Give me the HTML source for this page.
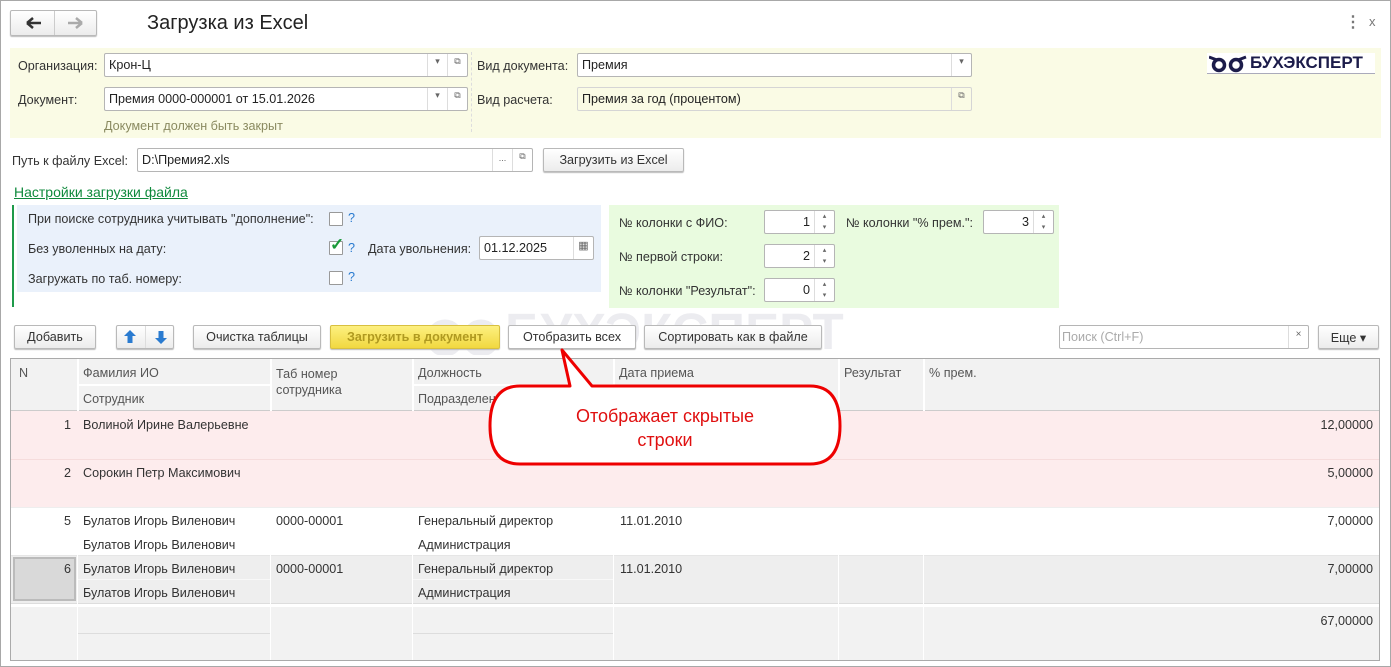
<!DOCTYPE html><html><head><meta charset="utf-8"><style>
*{box-sizing:border-box;margin:0;padding:0}
body{width:1391px;height:667px;position:relative;background:#fff;font-family:"Liberation Sans",Arial,sans-serif;font-size:12.6px;color:#333;overflow:hidden}
.a{position:absolute;white-space:nowrap}
.f{position:absolute;background:#fff;border:1px solid #b5b5b5;border-radius:2px;height:24px;padding:4px 0 0 4px;color:#222}
.btn{position:absolute;height:24px;border:1px solid #b9b9b9;border-radius:2px;background:linear-gradient(#fff,#ececec);box-shadow:0 1px 1px #bbb;text-align:center;padding-top:4px;color:#333}
.sb{position:absolute;top:0;bottom:0;width:20px;border-left:1px solid #ddd;text-align:center;font-size:9px;color:#666}
.cb{position:absolute;width:14px;height:14px;border:1px solid #999;background:#fff;border-radius:1px}
.q{position:absolute;color:#2a7bd0}
.l{position:absolute;background:#ddd}
</style></head><body>
<div class="a" style="left:0;top:0;width:1391px;height:667px;border:1px solid #a8a8a8"></div>
<div class="btn" style="left:10px;top:10px;width:87px;height:26px"></div>
<div class="l" style="left:54px;top:11px;width:1px;height:24px;background:#ccc"></div>
<svg class="a" style="left:24px;top:15px" width="64" height="16"><path d="M3 8H17M3 8L9 3M3 8L9 13" stroke="#333" stroke-width="2.5" fill="none"/><path d="M58 8H44M58 8L52 3M58 8L52 13" stroke="#aaa" stroke-width="2.5" fill="none"/></svg>
<div class="a" style="left:147px;top:12px;font-size:20px;color:#222">Загрузка из Excel</div>
<div class="a" style="left:1345px;top:12px;font-size:16px;color:#777;font-weight:bold">⋮</div>
<div class="a" style="left:1369px;top:14px;font-size:13px;color:#777">x</div>

<div class="a" style="left:10px;top:48px;width:1371px;height:90px;background:#fafbe5"></div>
<div class="a" style="left:471px;top:52px;height:80px;border-left:1px dashed #ddd"></div>
<div class="a" style="left:18px;top:59px">Организация:</div>
<div class="f" style="left:104px;top:53px;width:364px">Крон-Ц<div class="sb" style="right:20px;padding-top:2px">▾</div><div class="sb" style="right:0;padding-top:2px">⧉</div></div>
<div class="a" style="left:18px;top:93px">Документ:</div>
<div class="f" style="left:104px;top:87px;width:364px">Премия 0000-000001 от 15.01.2026<div class="sb" style="right:20px;padding-top:2px">▾</div><div class="sb" style="right:0;padding-top:2px">⧉</div></div>
<div class="a" style="left:104px;top:119px;color:#8a8a60">Документ должен быть закрыт</div>
<div class="a" style="left:477px;top:59px">Вид документа:</div>
<div class="f" style="left:577px;top:53px;width:395px">Премия<div class="sb" style="right:0;padding-top:2px">▾</div></div>
<div class="a" style="left:477px;top:93px">Вид расчета:</div>
<div class="f" style="left:577px;top:87px;width:395px;background:#fafbe5;border-color:#d5d5d5">Премия за год (процентом)<div class="sb" style="right:0;padding-top:2px">⧉</div></div>
<div class="a" style="left:1207px;top:53px;width:168px;height:21px;background:#fff;border-bottom:1px solid #aab"></div>
<svg class="a" style="left:1209px;top:55px" width="40" height="18"><g fill="none" stroke="#1c1c4a" stroke-width="3.5"><circle cx="10" cy="10" r="5.5"/><circle cx="27" cy="10" r="5.5"/></g><path d="M0 2L8 5M37 2L29 5" stroke="#1c1c4a" stroke-width="3"/></svg>
<div class="a" style="left:1250px;top:53px;font-size:17px;font-weight:bold;color:#1c1c4a">БУХЭКСПЕРТ</div>

<div class="a" style="left:12px;top:154px">Путь к файлу Excel:</div>
<div class="f" style="left:137px;top:148px;width:396px">D:\Премия2.xls<div class="sb" style="right:20px;padding-top:4px">...</div><div class="sb" style="right:0;padding-top:2px">⧉</div></div>
<div class="btn" style="left:543px;top:148px;width:141px">Загрузить из Excel</div>
<div class="a" style="left:14px;top:184px;color:#0f8a3c;font-size:14px;text-decoration:underline">Настройки загрузки файла</div>

<div class="a" style="left:12px;top:205px;width:2px;height:102px;background:#1e9a4a"></div>
<div class="a" style="left:17px;top:205px;width:584px;height:87px;background:#eaf1fb"></div>
<div class="a" style="left:28px;top:212px">При поиске сотрудника учитывать "дополнение":</div>
<div class="cb" style="left:329px;top:212px"></div><div class="q" style="left:348px;top:211px">?</div>
<div class="a" style="left:28px;top:242px">Без уволенных на дату:</div>
<div class="cb" style="left:329px;top:241px"></div><div class="a" style="left:330px;top:235px;color:#1a9a3a;font-size:17px;font-weight:bold">✓</div><div class="q" style="left:348px;top:241px">?</div>
<div class="a" style="left:368px;top:242px">Дата увольнения:</div>
<div class="f" style="left:479px;top:236px;width:115px">01.12.2025<div class="sb" style="right:0;padding-top:2px;font-size:11px">▦</div></div>
<div class="a" style="left:28px;top:272px">Загружать по таб. номеру:</div>
<div class="cb" style="left:329px;top:271px"></div><div class="q" style="left:348px;top:270px">?</div>

<div class="a" style="left:609px;top:205px;width:450px;height:103px;background:#e9fbdf"></div>
<div class="a" style="left:619px;top:216px">№ колонки с ФИО:</div>
<div class="f" style="left:764px;top:210px;width:71px;padding:4px 24px 0 0;text-align:right">1<div class="sb" style="right:0;font-size:7px;line-height:11px">▴<br>▾</div></div>
<div class="a" style="left:846px;top:216px">№ колонки "% прем.":</div>
<div class="f" style="left:983px;top:210px;width:71px;padding:4px 24px 0 0;text-align:right">3<div class="sb" style="right:0;font-size:7px;line-height:11px">▴<br>▾</div></div>
<div class="a" style="left:619px;top:250px">№ первой строки:</div>
<div class="f" style="left:764px;top:244px;width:71px;padding:4px 24px 0 0;text-align:right">2<div class="sb" style="right:0;font-size:7px;line-height:11px">▴<br>▾</div></div>
<div class="a" style="left:619px;top:284px">№ колонки "Результат":</div>
<div class="f" style="left:764px;top:278px;width:71px;padding:4px 24px 0 0;text-align:right">0<div class="sb" style="right:0;font-size:7px;line-height:11px">▴<br>▾</div></div>

<svg class="a" style="left:415px;top:310px" width="90" height="45"><g fill="none" stroke="#ececf0" stroke-width="9"><circle cx="30" cy="28" r="14"/><circle cx="66" cy="28" r="14"/></g></svg>
<div class="a" style="left:505px;top:302px;font-size:51px;font-weight:bold;color:#ececf0">БУХЭКСПЕРТ</div>

<div class="btn" style="left:14px;top:325px;width:82px">Добавить</div>
<div class="btn" style="left:116px;top:325px;width:58px"></div>
<div class="l" style="left:145px;top:326px;width:1px;height:22px"></div>
<svg class="a" style="left:122px;top:329px" width="48" height="16"><path d="M8 1L2 7H5.5V14H10.5V7H14Z" fill="#2a7bd0"/><path d="M39 15L33 9H36.5V2H41.5V9H45Z" fill="#2a7bd0"/></svg>
<div class="btn" style="left:193px;top:325px;width:128px">Очистка таблицы</div>
<div class="btn" style="left:330px;top:325px;width:170px;background:linear-gradient(#fdf080,#f1d840);border-color:#d8c040;color:#b09a20;font-weight:bold">Загрузить в документ</div>
<div class="btn" style="left:508px;top:325px;width:128px;background:#fff">Отобразить всех</div>
<div class="btn" style="left:644px;top:325px;width:178px">Сортировать как в файле</div>
<div class="f" style="left:1059px;top:325px;width:250px;color:#aaa;padding-left:2px">Поиск (Ctrl+F)<div class="sb" style="right:0;padding-top:3px;font-size:10px">×</div></div>
<div class="btn" style="left:1318px;top:325px;width:61px">Еще ▾</div>

<div class="a" style="left:10px;top:358px;width:1370px;height:303px;border:1px solid #aaa;background:#fff"></div>
<div class="a" style="left:11px;top:359px;width:1368px;height:52px;background:#f2f2f2"></div>
<div class="a" style="left:11px;top:411px;width:1368px;height:96px;background:#fdeced"></div>
<div class="a" style="left:11px;top:555px;width:1368px;height:48px;background:#eeeeee"></div>
<div class="a" style="left:13px;top:557px;width:63px;height:44px;background:#d9d9d9;border:2px solid #bbb"></div>
<div class="a" style="left:11px;top:607px;width:1368px;height:53px;background:#f2f2f2"></div>
<div class="l" style="left:11px;top:410px;width:1368px;height:1px;background:#ccc"></div>
<div class="l" style="left:11px;top:459px;width:1368px;height:1px;background:#f6dcdc"></div>
<div class="l" style="left:11px;top:507px;width:1368px;height:1px;background:#eee"></div>
<div class="l" style="left:11px;top:555px;width:1368px;height:1px;background:#e6e6e6"></div>
<div class="l" style="left:11px;top:603px;width:1368px;height:1px;background:#ddd"></div>
<div class="l" style="left:77px;top:384px;width:193px;height:2px;background:#fff"></div>
<div class="l" style="left:412px;top:384px;width:201px;height:2px;background:#fff"></div>
<div class="l" style="left:77px;top:579px;width:193px;height:1px;background:#f8f8f8"></div>
<div class="l" style="left:412px;top:579px;width:201px;height:1px;background:#f8f8f8"></div>
<div class="l" style="left:77px;top:633px;width:193px;height:1px;background:#ddd"></div>
<div class="l" style="left:412px;top:633px;width:201px;height:1px;background:#ddd"></div>
<div class="l" style="left:77px;top:359px;width:2px;height:52px;background:#fff"></div>
<div class="l" style="left:270px;top:359px;width:2px;height:52px;background:#fff"></div>
<div class="l" style="left:412px;top:359px;width:2px;height:52px;background:#fff"></div>
<div class="l" style="left:613px;top:359px;width:2px;height:52px;background:#fff"></div>
<div class="l" style="left:838px;top:359px;width:2px;height:52px;background:#fff"></div>
<div class="l" style="left:923px;top:359px;width:2px;height:52px;background:#fff"></div>
<div class="l" style="left:77px;top:555px;width:1px;height:105px;background:#fff"></div>
<div class="l" style="left:270px;top:555px;width:1px;height:105px;background:#fff"></div>
<div class="l" style="left:412px;top:555px;width:1px;height:105px;background:#fff"></div>
<div class="l" style="left:613px;top:555px;width:1px;height:105px;background:#fff"></div>
<div class="l" style="left:838px;top:555px;width:1px;height:105px;background:#fff"></div>
<div class="l" style="left:923px;top:555px;width:1px;height:105px;background:#fff"></div>
<div class="a" style="left:19px;top:366px;color:#555">N</div>
<div class="a" style="left:83px;top:366px;color:#555">Фамилия ИО</div>
<div class="a" style="left:83px;top:392px;color:#555">Сотрудник</div>
<div class="a" style="left:276px;top:366px;color:#555;line-height:16px">Таб номер<br>сотрудника</div>
<div class="a" style="left:418px;top:366px;color:#555">Должность</div>
<div class="a" style="left:418px;top:392px;color:#555">Подразделение</div>
<div class="a" style="left:619px;top:366px;color:#555">Дата приема</div>
<div class="a" style="left:844px;top:366px;color:#555">Результат</div>
<div class="a" style="left:929px;top:366px;color:#555">% прем.</div>

<div class="a" style="left:64px;top:418px">1</div><div class="a" style="left:83px;top:418px">Волиной Ирине Валерьевне</div><div class="a" style="right:18px;top:418px">12,00000</div>
<div class="a" style="left:64px;top:466px">2</div><div class="a" style="left:83px;top:466px">Сорокин Петр Максимович</div><div class="a" style="right:18px;top:466px">5,00000</div>
<div class="a" style="left:64px;top:514px">5</div><div class="a" style="left:83px;top:514px">Булатов Игорь Виленович</div><div class="a" style="left:276px;top:514px">0000-00001</div><div class="a" style="left:418px;top:514px">Генеральный директор</div><div class="a" style="left:620px;top:514px">11.01.2010</div><div class="a" style="right:18px;top:514px">7,00000</div>
<div class="a" style="left:83px;top:538px">Булатов Игорь Виленович</div><div class="a" style="left:418px;top:538px">Администрация</div>
<div class="a" style="left:64px;top:562px">6</div><div class="a" style="left:83px;top:562px">Булатов Игорь Виленович</div><div class="a" style="left:276px;top:562px">0000-00001</div><div class="a" style="left:418px;top:562px">Генеральный директор</div><div class="a" style="left:620px;top:562px">11.01.2010</div><div class="a" style="right:18px;top:562px">7,00000</div>
<div class="a" style="left:83px;top:586px">Булатов Игорь Виленович</div><div class="a" style="left:418px;top:586px">Администрация</div>
<div class="a" style="right:18px;top:614px">67,00000</div>

<svg class="a" style="left:480px;top:340px" width="370" height="130"><path d="M82 10 L112 46 L330 46 Q360 46 360 86 Q360 124 330 124 L40 124 Q10 124 10 86 Q10 46 40 46 L90 46 Z" fill="#fff" stroke="#e00" stroke-width="3" stroke-linejoin="round"/></svg>
<div class="a" style="left:490px;top:404px;width:350px;text-align:center;color:#e01010;font-size:18px;line-height:24px">Отображает скрытые<br>строки</div>
</body></html>
